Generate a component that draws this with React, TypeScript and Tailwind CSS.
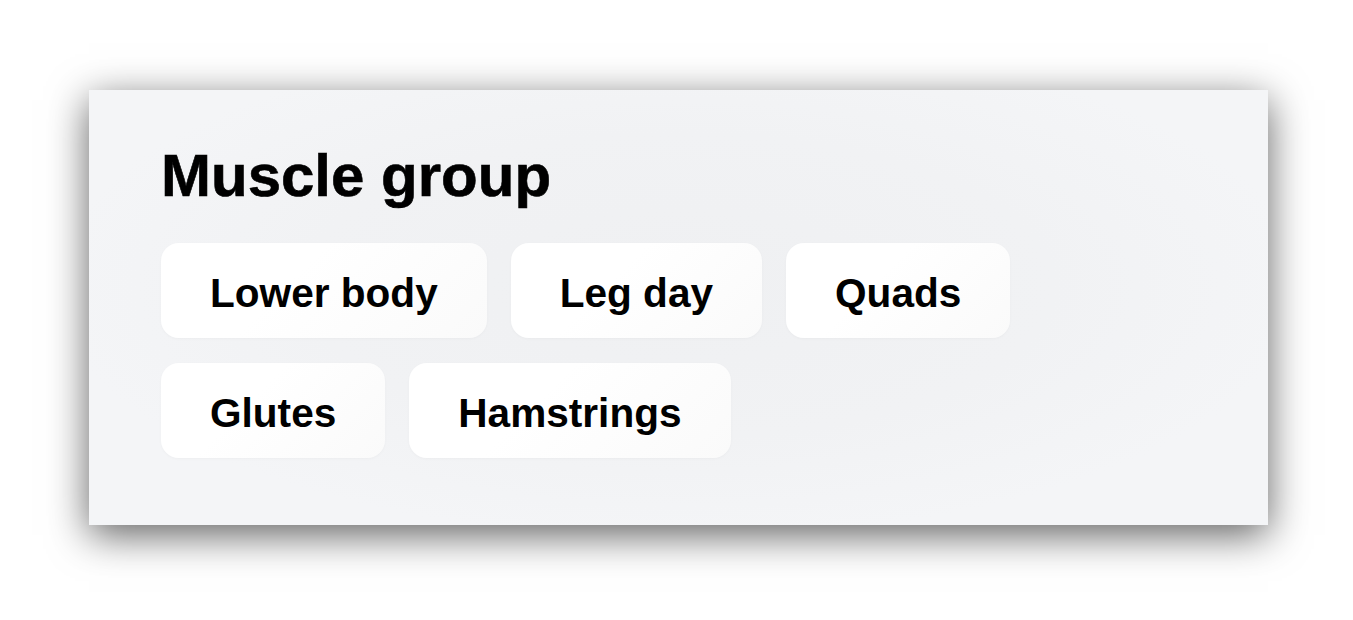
const groups = [
  ['Lower body', 'Leg day', 'Quads'],
  ['Glutes', 'Hamstrings'],
];

export default function App() {
  return (
    <div className="min-h-[620px] w-full bg-white pt-[90px] font-['Liberation_Sans',Arial,sans-serif]">
      <div className="ml-[89px] w-[1179px] bg-[#f3f4f6] bg-[radial-gradient(ellipse_at_50%_45%,#eff0f2_0%,#f1f2f4_45%,#f4f5f7_75%)] pl-[72px] pr-[72px] pt-[56px] pb-[67px] shadow-[0_10px_38px_rgba(0,0,0,0.62)]">
        <h2 className="mb-[37px] text-[60px] font-bold leading-none text-black [-webkit-text-stroke:0.6px_black]">
          Muscle group
        </h2>
        <div className="flex flex-col gap-[25px]">
          {groups.map((row, i) => (
            <div key={i} className="flex gap-6">
              {row.map((label) => (
                <span
                  key={label}
                  className="rounded-[18px] bg-[linear-gradient(135deg,#ffffff_40%,#fafafa)] px-[49px] pt-[27px] pb-[21px] text-[40.6px] font-bold leading-[47px] text-black shadow-[0_1px_3px_rgba(0,0,0,0.03)]"
                >
                  {label}
                </span>
              ))}
            </div>
          ))}
        </div>
      </div>
    </div>
  );
}
